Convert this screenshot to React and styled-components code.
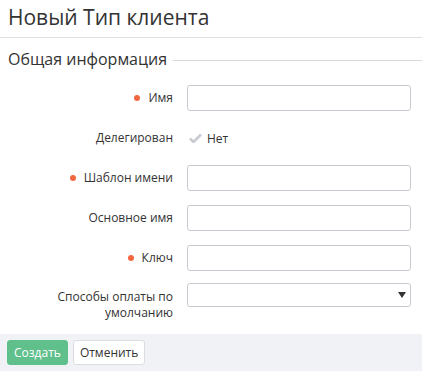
import React from "react";
import styled, { createGlobalStyle } from "styled-components";

const Global = createGlobalStyle`
  html, body { margin: 0; padding: 0; background: #fff; }
  body { font-family: "Open Sans", "Noto Sans", sans-serif; color: #333; }
  * { box-sizing: border-box; }
`;

const Page = styled.div`
  width: 422px;
  height: 371px;
  display: flex;
  flex-direction: column;
  overflow: hidden;
`;

const Header = styled.div`
  height: 38px;
  padding: 3px 8px 0;
  border-bottom: 1px solid #dcdfe4;
`;

const Title = styled.h1`
  margin: 0;
  font-size: 21px;
  font-weight: 400;
  line-height: 28px;
  color: #333;
`;

const Body = styled.div`
  flex: 1;
  padding: 10px 0 0 8px;
`;

const Legend = styled.div`
  display: flex;
  align-items: center;
  gap: 6px;
  font-size: 16px;
  line-height: 22px;
  color: #333;
  margin-bottom: 15px;
  &::after {
    content: "";
    flex: 1;
    height: 1px;
    background: #d6d9de;
    margin-top: 2px;
  }
`;

const Form = styled.div`
  display: grid;
  grid-template-columns: 165px 224px;
  column-gap: 14px;
  row-gap: 14px;
  align-items: center;
`;

const Label = styled.div`
  font-size: 12px;
  line-height: 16px;
  text-align: right;
  color: #333;
  display: flex;
  justify-content: flex-end;
  align-items: center;
  gap: 8px;
  align-self: ${(p) => (p.$top ? "start" : "center")};
  padding-top: ${(p) => (p.$top ? "4px" : "0")};
  &::before {
    content: "";
    display: ${(p) => (p.$required ? "block" : "none")};
    width: 6px;
    height: 6px;
    border-radius: 50%;
    background: #f26640;
  }
`;

const Input = styled.div`
  height: 26px;
  border: 1px solid #c7cbd1;
  border-radius: 3px;
  background: #fff;
`;

const Select = styled(Input)`
  height: 24px;
  align-self: start;
  margin-top: -2px;
  display: flex;
  align-items: center;
  justify-content: flex-end;
  padding-right: 4px;
`;

const Value = styled.div`
  height: 26px;
  display: flex;
  align-items: center;
  gap: 5px;
  font-size: 12px;
  padding-left: 2px;
`;

const Footer = styled.div`
  height: 37px;
  background: #f0f2f5;
  display: flex;
  align-items: center;
  gap: 5px;
  padding: 0 7px;
`;

const Button = styled.button`
  height: 25px;
  padding: 0 6px;
  font-family: "Open Sans", "Noto Sans", sans-serif;
  font-size: 12px;
  border-radius: 3px;
  border: 1px solid ${(p) => (p.$primary ? "#5fc08c" : "#dadde2")};
  background: ${(p) => (p.$primary ? "#5fc08c" : "#fff")};
  color: ${(p) => (p.$primary ? "#fff" : "#333")};
`;

const Check = () => (
  <svg width="13" height="10" viewBox="0 0 13 10">
    <path d="M1 5.5 L4.5 9 L12 1.5" fill="none" stroke="#c8ccd2" strokeWidth="2.6" />
  </svg>
);

const Caret = () => (
  <svg width="8" height="6" viewBox="0 0 8 6">
    <path d="M0 0 H8 L4 6 Z" fill="#333" />
  </svg>
);

export default function App() {
  return (
    <Page>
      <Global />
      <Header>
        <Title>Новый Тип клиента</Title>
      </Header>
      <Body>
        <Legend>Общая информация</Legend>
        <Form>
          <Label $required>Имя</Label>
          <Input />
          <Label>Делегирован</Label>
          <Value>
            <Check />
            Нет
          </Value>
          <Label $required>Шаблон имени</Label>
          <Input />
          <Label>Основное имя</Label>
          <Input />
          <Label $required>Ключ</Label>
          <Input />
          <Label $top>
            Способы оплаты по
            <br />
            умолчанию
          </Label>
          <Select>
            <Caret />
          </Select>
        </Form>
      </Body>
      <Footer>
        <Button $primary>Создать</Button>
        <Button>Отменить</Button>
      </Footer>
    </Page>
  );
}
